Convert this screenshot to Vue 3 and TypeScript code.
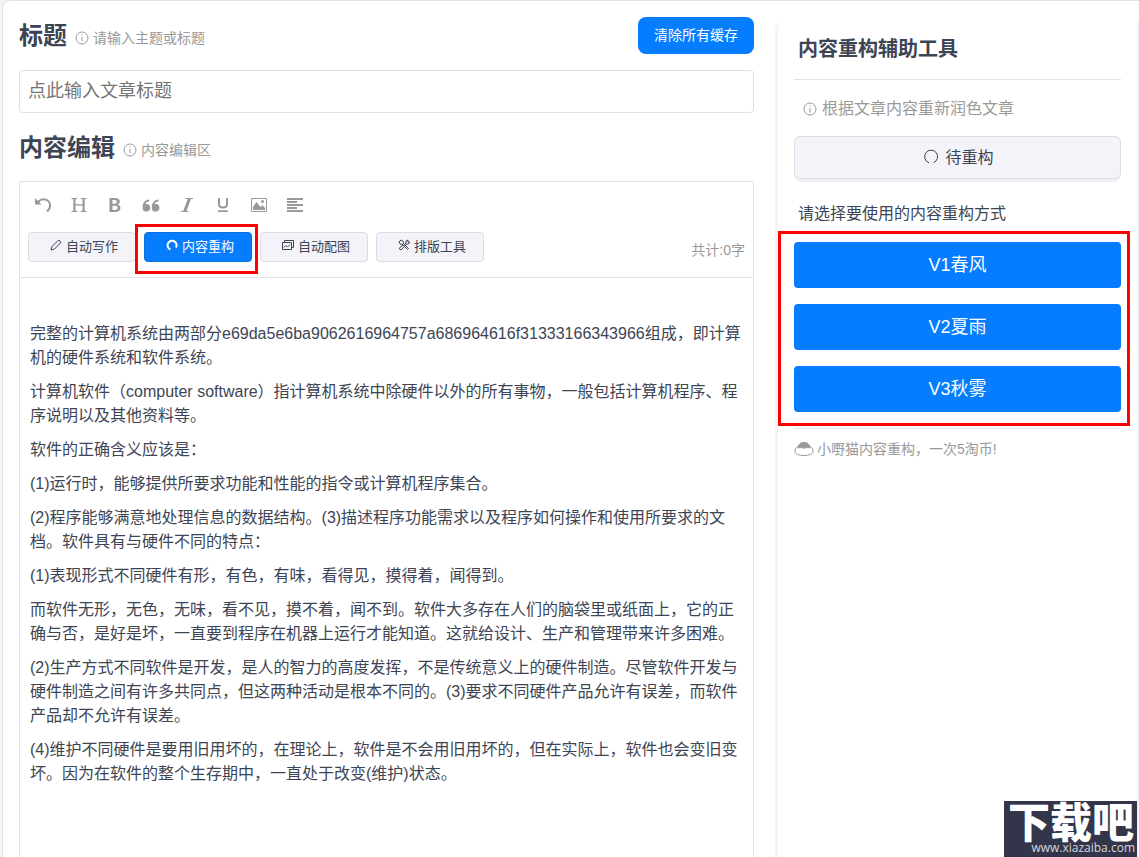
<script setup lang="ts">
import { ref } from 'vue'

const title = ref('')
const modes: string[] = ['V1春风', 'V2夏雨', 'V3秋雾']
const paragraphs: string[] = [
  '完整的计算机系统由两部分e69da5e6ba9062616964757a686964616f31333166343966组成，即计算机的硬件系统和软件系统。',
  '计算机软件（computer software）指计算机系统中除硬件以外的所有事物，一般包括计算机程序、程序说明以及其他资料等。',
  '软件的正确含义应该是：',
  '(1)运行时，能够提供所要求功能和性能的指令或计算机程序集合。',
  '(2)程序能够满意地处理信息的数据结构。(3)描述程序功能需求以及程序如何操作和使用所要求的文档。软件具有与硬件不同的特点：',
  '(1)表现形式不同硬件有形，有色，有味，看得见，摸得着，闻得到。',
  '而软件无形，无色，无味，看不见，摸不着，闻不到。软件大多存在人们的脑袋里或纸面上，它的正确与否，是好是坏，一直要到程序在机器上运行才能知道。这就给设计、生产和管理带来许多困难。',
  '(2)生产方式不同软件是开发，是人的智力的高度发挥，不是传统意义上的硬件制造。尽管软件开发与硬件制造之间有许多共同点，但这两种活动是根本不同的。(3)要求不同硬件产品允许有误差，而软件产品却不允许有误差。',
  '(4)维护不同硬件是要用旧用坏的，在理论上，软件是不会用旧用坏的，但在实际上，软件也会变旧变坏。因为在软件的整个生存期中，一直处于改变(维护)状态。',
]
</script>

<template>
  <div class="page">
    <div class="shell">
      <main class="main">
        <header class="head">
          <h1><label for="title">标题</label></h1>
          <span class="hint">
            <svg viewBox="0 0 14 14" class="info"><circle cx="7" cy="7" r="6" /><path d="M7 6v4.500M7 3.500v1.200" /></svg>
            请输入主题或标题
          </span>
          <button type="button" class="clear">清除所有缓存</button>
        </header>
        <input id="title" v-model="title" class="title" type="text" placeholder="点此输入文章标题" />
        <div class="head second">
          <h1>内容编辑</h1>
          <span class="hint">
            <svg viewBox="0 0 14 14" class="info"><circle cx="7" cy="7" r="6" /><path d="M7 6v4.500M7 3.500v1.200" /></svg>
            内容编辑区
          </span>
        </div>

        <section class="editor">
          <div class="toolbar">
            <div class="formats">
              <button type="button" aria-label="撤销">
                <svg viewBox="0 0 18 18"><path class="line" d="M4 6C8.500 1.200 16 3.200 16 9.500c0 2.500-1 4.500-3 6" /><path d="M1 2v6.500h6.500z" /></svg>
              </button>
              <button type="button" aria-label="标题">
                <svg viewBox="0 0 18 18"><path d="M1.500 2h5.800v1l-1.800.3v5h7v-5L10.700 3V2h5.800v1l-1.800.3v11.400l1.800.3v1h-5.800v-1l1.800-.3V9.500h-7v5.200l1.800.3v1H1.500v-1l1.800-.3V3.300L1.500 3z" /></svg>
              </button>
              <button type="button" aria-label="加粗">
                <svg viewBox="0 0 18 18"><path fill-rule="evenodd" d="M3.500 2H9c6 0 6 5.500 2.500 6.600C16 9.700 15.500 16 9.500 16h-6zM6.500 4v3.700H8.500c3.200 0 3.200-3.700 0-3.700zM6.500 9.800V14H9c3.700 0 3.700-4.200 0-4.200z" /></svg>
              </button>
              <button type="button" aria-label="引用">
                <svg viewBox="0 0 18 18"><path d="M4.500 8a3.800 3.800 0 1 1-3.900 3.900C.4 7 3 4 7.300 3.500v1.700C5 5.600 3.800 6.600 3.400 8zM13.700 8a3.800 3.800 0 1 1-3.900 3.900C9.600 7 12.200 4 16.500 3.500v1.700c-2.300.4-3.500 1.400-3.900 2.800z" /></svg>
              </button>
              <button type="button" aria-label="斜体">
                <svg viewBox="0 0 18 18"><path d="M7.500 2H15v1h-2L8.500 15h2v1H3v-1h2.200L9.700 3H7.500z" /></svg>
              </button>
              <button type="button" aria-label="下划线">
                <svg viewBox="0 0 18 18"><path class="line" d="M5 2v6c0 4.700 8 4.700 8 0V2" /><path d="M4 14.300h10V16H4z" /></svg>
              </button>
              <button type="button" aria-label="图片">
                <svg viewBox="0 0 18 18"><path class="thin" d="M1.500 2.500h15v13h-15z" /><circle cx="12.500" cy="5.500" r="1.500" /><path d="M3 14v-3l3.500-5 4 5 2-1.700L15 12v2z" /></svg>
              </button>
              <button type="button" aria-label="对齐">
                <svg viewBox="0 0 18 18"><path d="M1 2h16v2H1zM1 5h10v2H1zM1 8h16v2H1zM1 11h10v2H1zM1 14h16v2H1z" /></svg>
              </button>
            </div>
            <div class="tools">
              <button type="button" class="tool">
                <svg viewBox="0 0 12 12"><path d="M1 11l1-3.500 6-6c1-1 3.500 1.500 2.500 2.500l-6 6z" /></svg>自动写作
              </button>
              <div class="marked">
                <button type="button" class="tool active">
                  <svg viewBox="0 0 12 12"><path class="arc" d="M4.500 10.500A4.500 4.500 0 1 1 10 8.500" /></svg>内容重构
                </button>
                <i class="mark"></i>
              </div>
              <button type="button" class="tool">
                <svg viewBox="0 0 12 12"><path d="M2.500 3V1.500h9v7H10M.5 3.500h9v7h-9zM2 8.500l2-2L5.500 8 8 5.500" /></svg>自动配图
              </button>
              <button type="button" class="tool">
                <svg viewBox="0 0 12 12"><path d="M1 3l2-2 2.500 1.500L5 4l5.500 5.500-1 1L4 5 2.500 5.500zM7 5l1-1V2l2-1v2h1.500L10.500 5H8.500L3 11l-2-1.500L5 6" /></svg>排版工具
              </button>
              <span class="count">共计:0字</span>
            </div>
          </div>
          <article class="content">
            <p v-for="text in paragraphs" :key="text">{{ text }}</p>
          </article>
        </section>
      </main>

      <aside class="aside">
        <h2>内容重构辅助工具</h2>
        <p class="about">
          <svg viewBox="0 0 14 14" class="info"><circle cx="7" cy="7" r="6" /><path d="M7 6v4.500M7 3.500v1.200" /></svg>
          根据文章内容重新润色文章
        </p>
        <button type="button" class="pending">
          <svg viewBox="0 0 16 16"><path d="M6 14.800A6.500 6.500 0 1 1 10.500 14.700" /></svg>待重构
        </button>
        <p class="choose">请选择要使用的内容重构方式</p>
        <div class="modes">
          <button v-for="mode in modes" :key="mode" type="button">{{ mode }}</button>
          <i class="mark"></i>
        </div>
        <p class="price">
          <svg viewBox="0 0 20 16"><path class="lid" d="M4 6.500C5 2.500 7 1.500 10 1.500s5 1 6 5c-1.500 1-3-.5-4.500.3-1 .6-2 .6-3 0C7 6 5.500 7.500 4 6.500z" /><path d="M4 5C2 6.500 1 8.500 1 10.500c0 2.500 4 4 9 4s9-1.500 9-4c0-2-1-4-3-5.500" /></svg>
          小嘢猫内容重构，一次5淘币!
        </p>
      </aside>
    </div>
    <div class="watermark">
      <strong>下载吧</strong>
      <span>www.xiazaiba.com</span>
    </div>
  </div>
</template>

<style>
body {
  margin: 0;
  background: #f3f3f9;
}
</style>

<style scoped>
* {
  box-sizing: border-box;
}
.page {
  position: relative;
  height: 100vh;
  overflow: hidden;
  padding-left: 2px;
  color: #3d4554;
  font-family: "Liberation Sans", "Noto Sans CJK SC", sans-serif;
}
h1,
h2,
p {
  margin: 0;
}
button {
  font-family: inherit;
  cursor: pointer;
}
svg {
  flex: none;
  fill: none;
  stroke: currentColor;
}
.shell {
  display: flex;
  min-height: 100%;
  border: solid #e1e1e5;
  border-width: 1px 0 0 1px;
  border-radius: 8px 0 0 0;
  background: #fff;
}
.main {
  display: flex;
  flex: 1;
  flex-direction: column;
  min-width: 0;
  padding: 16px 21px 0 16px;
}
.head {
  display: flex;
  align-items: center;
  height: 37px;
}
.head h1 {
  font-size: 24px;
  line-height: 36px;
}
.hint {
  display: flex;
  align-items: center;
  gap: 4px;
  margin: 5px 0 0 8px;
  color: #999;
  font-size: 14px;
  line-height: 20px;
}
.info {
  width: 14px;
  height: 14px;
}
.clear {
  height: 37px;
  margin-left: auto;
  padding: 0 16px 4px;
  border: 0;
  border-radius: 8px;
  background: #067dff;
  color: #fff;
  font-size: 14px;
}
.title {
  width: 100%;
  height: 43px;
  margin-top: 16px;
  padding: 0 8px;
  border: 1px solid #dcdfe8;
  border-radius: 4px;
  background: #fff;
  color: inherit;
  font-family: inherit;
  font-size: 18px;
}
.title::placeholder {
  color: #757575;
}
.second {
  margin-top: 16px;
}
.editor {
  flex: 1;
  margin-top: 15px;
  border: solid #e2e2e4;
  border-width: 1px 1px 0;
}
.toolbar {
  height: 96px;
  padding: 5px 8px 0;
  border-bottom: 1px solid #e2e2e4;
}
.formats {
  display: flex;
  margin-left: -3px;
}
.formats button {
  display: flex;
  align-items: center;
  justify-content: center;
  width: 36px;
  height: 36px;
  padding: 0;
  border: 0;
  background: none;
  color: #999;
}
.formats svg {
  width: 18px;
  height: 18px;
  fill: currentColor;
  stroke: none;
}
.formats .line,
.formats .thin {
  fill: none;
  stroke: currentColor;
  stroke-width: 2;
}
.formats .thin {
  stroke-width: 1;
}
.tools {
  display: flex;
  gap: 8px;
  margin-top: 9px;
}
.tool {
  display: flex;
  align-items: center;
  justify-content: center;
  gap: 4px;
  width: 108px;
  height: 30px;
  padding: 0 0 4px 4px;
  border: 1px solid #dcdce2;
  border-radius: 4px;
  background: #f3f3f9;
  color: #3d4554;
  font-size: 13px;
}
.tool svg {
  width: 12px;
  height: 12px;
}
.active {
  border-color: #0a70dd;
  background: #067dff;
  color: #fff;
}
.arc {
  stroke-width: 2;
}
.marked,
.modes {
  position: relative;
}
.mark {
  position: absolute;
  border: 3px solid #fe0000;
  pointer-events: none;
}
.marked .mark {
  inset: -8px -6px -12px -9px;
}
.count {
  align-self: flex-end;
  margin-left: auto;
  color: #999;
  font-size: 14px;
  line-height: 24px;
}
.content {
  padding: 44px 10px 10px;
  font-size: 16px;
  line-height: 24px;
}
.content p + p {
  margin-top: 10px;
}
.aside {
  width: 364px;
  margin-top: 21px;
  padding: 0 16px;
  border: solid #f3f3f9;
  border-width: 0 2px 0 3px;
  border-radius: 8px 0 0 0;
}
h2 {
  padding: 12px 4px 15px;
  border-bottom: 1px solid #e2e2e4;
  font-size: 20px;
  line-height: 30px;
}
.about {
  display: flex;
  align-items: center;
  gap: 5px;
  margin: 17px 0 15px 9px;
  color: #999;
  font-size: 16px;
  line-height: 24px;
}
.pending {
  display: flex;
  align-items: center;
  justify-content: center;
  gap: 6px;
  width: 100%;
  height: 43px;
  padding: 0 0 3px 2px;
  border: 1px solid #dcdce2;
  border-radius: 6px;
  background: #f3f3f9;
  box-shadow: 0 4px 0 -1px #f0f1f6;
  color: #3d4554;
  font-size: 16px;
}
.pending svg {
  width: 16px;
  height: 16px;
}
.choose {
  margin: 23px 4px 16px;
  font-size: 16px;
  line-height: 24px;
}
.modes {
  display: grid;
  gap: 16px;
}
.modes button {
  height: 46px;
  padding: 0 0 4px;
  border: 0;
  border-radius: 4px;
  background: #067dff;
  color: #fff;
  font-size: 18px;
}
.modes .mark {
  inset: -11px -9px -14px -16px;
}
.price {
  display: flex;
  align-items: center;
  gap: 3px;
  margin-top: 16px;
  padding-top: 8px;
  border-top: 1px solid #e2e2e4;
  color: #999;
  font-size: 14px;
  line-height: 24px;
}
.price svg {
  width: 20px;
  height: 16px;
}
.lid {
  fill: currentColor;
}
.watermark {
  position: absolute;
  right: 2px;
  bottom: 0;
  display: flex;
  flex-direction: column;
  align-items: flex-end;
  width: 133px;
  height: 56px;
  background: #33364b;
  color: #fff;
}
.watermark strong {
  padding-right: 3px;
  font-family: "Noto Sans CJK SC", sans-serif;
  font-size: 42px;
  font-weight: 900;
  line-height: 38px;
}
.watermark span {
  padding-right: 2px;
  color: #d5d6dc;
  font-family: "Open Sans", sans-serif;
  font-size: 12px;
  line-height: 18px;
}
</style>
